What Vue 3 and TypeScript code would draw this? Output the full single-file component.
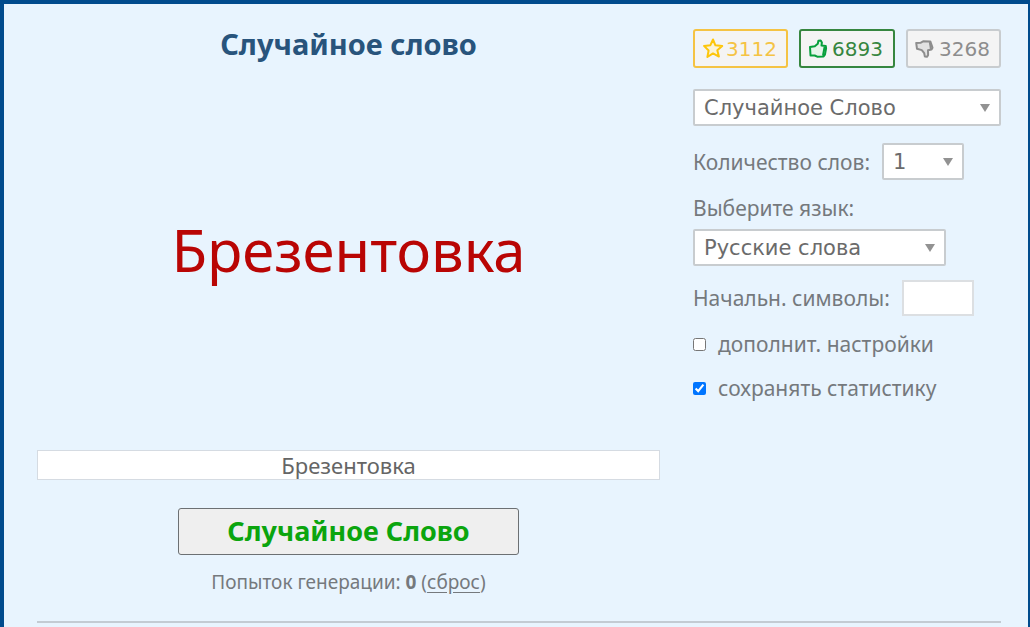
<script setup lang="ts">
import { ref } from 'vue'

const word = ref('Брезентовка')
const attempts = ref(0)
const generator = ref('Случайное Слово')
const count = ref('1')
const language = ref('Русские слова')
const prefix = ref('')
const extra = ref(false)
const keepStats = ref(true)

const generators: string[] = ['Случайное Слово']
const counts: string[] = ['1', '2', '3', '4', '5']
const languages: string[] = ['Русские слова']

function generate(): void {
  attempts.value += 1
}
</script>

<template>
  <div class="page">
    <div class="columns">
      <main class="stage">
        <h1 class="title">Случайное слово</h1>
        <div class="word">{{ word }}</div>
        <input v-model="word" class="result" type="text" aria-label="Результат" readonly />
        <button class="generate" type="button" @click="generate">Случайное Слово</button>
        <p class="attempts">
          Попыток генерации: <b>{{ attempts }}</b> (<a href="#" @click.prevent="attempts = 0">сброс</a>)
        </p>
      </main>

      <aside class="options">
        <div class="votes">
          <button class="vote star" type="button" aria-label="Избранное">
            <svg width="22" height="22" viewBox="0 0 22 22" aria-hidden="true">
              <path d="M11 1.5l2.4 5.8 6.8.8-4.9 4.2 1.6 6.3-5.9-3.2-5.6 3.6 1.2-6.5-4.6-4.6 6.4-.7z" />
            </svg>
            <span>3112</span>
          </button>
          <button class="vote up" type="button" aria-label="Нравится">
            <svg width="20" height="20" viewBox="0 0 20 20" aria-hidden="true">
              <path d="M2 8l4.8-.8 3-2.5.6-3 2.3-.3 1.2 2-.4 3.2 4.3.5.3 2.2-1.2 6.4-1.3 1.7-6.4.3-2.5-1.2-4.2-.1z" />
              <path d="M16.6 8l-1.6 8.8" />
            </svg>
            <span>6893</span>
          </button>
          <button class="vote down" type="button" aria-label="Не нравится">
            <svg width="20" height="20" viewBox="0 0 20 20" aria-hidden="true">
              <path d="M1.2 3.9l4.3-.1 3-1.6 6.8.2 2.2 6.3-1 1.8-3.5.7.1 4.9-1.2 1.7-2.1-.4-.6-3.3-2.4-3-4.8-1.3z" />
              <path d="M14.8 3l1.1 6.9" />
            </svg>
            <span>3268</span>
          </button>
        </div>

        <div class="select wide">
          <select v-model="generator" aria-label="Генератор">
            <option v-for="item in generators" :key="item">{{ item }}</option>
          </select>
        </div>

        <div class="row">
          <label for="count">Количество слов:</label>
          <div class="select count">
            <select id="count" v-model="count">
              <option v-for="item in counts" :key="item">{{ item }}</option>
            </select>
          </div>
        </div>

        <div class="field">
          <label for="language">Выберите язык:</label>
          <div class="select language">
            <select id="language" v-model="language">
              <option v-for="item in languages" :key="item">{{ item }}</option>
            </select>
          </div>
        </div>

        <div class="row prefix-row">
          <label for="prefix">Начальн. символы:</label>
          <input id="prefix" v-model="prefix" class="prefix" type="text" />
        </div>

        <label class="check"><input v-model="extra" type="checkbox" />дополнит. настройки</label>
        <label class="check"><input v-model="keepStats" type="checkbox" />сохранять статистику</label>
      </aside>
    </div>
    <hr class="divider" />
  </div>
</template>

<style>
body {
  margin: 0;
}
</style>

<style scoped>
.page,
.page * {
  box-sizing: border-box;
}

.page {
  min-height: 100vh;
  padding: 0 27px 0 33px;
  border: solid #004b8d;
  border-width: 4px 2px 0 4px;
  background: #e8f4fe;
  color: #75797d;
  font-family: "Noto Sans", "Open Sans", sans-serif;
  font-size: 21px;
}

.columns {
  display: grid;
  grid-template-columns: minmax(0, 1fr) 308px;
  gap: 33px;
}

.stage {
  display: flex;
  flex-direction: column;
  align-items: center;
}

.title {
  margin: 20px 0 0;
  color: #28547c;
  font-size: 29px;
  font-weight: 700;
  line-height: 40px;
}

.word {
  display: flex;
  align-items: center;
  height: 386px;
  padding-bottom: 14px;
  color: #b90504;
  font-size: 58px;
  line-height: 80px;
}

.result {
  width: 100%;
  height: 30px;
  padding: 0;
  border: 1px solid #d5dbe2;
  background: #fff;
  color: #656565;
  font-family: inherit;
  font-size: 22px;
  line-height: 28px;
  text-align: center;
}

.generate {
  width: 341px;
  max-width: 100%;
  height: 47px;
  margin-top: 28px;
  padding: 0 0 2px;
  border: 1px solid #6c7073;
  border-radius: 3px;
  background: #efefef;
  color: #0ba50e;
  font-family: inherit;
  font-size: 27px;
  font-weight: 700;
  line-height: 40px;
}

.attempts {
  margin: 12px 0 0;
  font-size: 19px;
  line-height: 30px;
}

.attempts a {
  color: inherit;
  text-underline-offset: 3px;
}

.options {
  padding-top: 25px;
}

.votes {
  display: grid;
  grid-template-columns: 95px 96px 95px;
  justify-content: space-between;
}

.vote {
  display: flex;
  align-items: center;
  gap: 4px;
  height: 39px;
  padding: 0 0 0 7px;
  border: 2px solid currentColor;
  border-radius: 3px;
  background: #f4f4f4;
  font-family: "DejaVu Sans", sans-serif;
  font-size: 20px;
}

.vote svg {
  flex: none;
  fill: none;
  stroke: currentColor;
  stroke-width: 2;
  stroke-linejoin: round;
}

.star {
  gap: 2px;
  border-color: #f5c343;
  color: #f5c343;
}

.star svg {
  fill: #fbf4d8;
  stroke: #fdc60b;
}

.up {
  border-color: #36863f;
  color: #36863f;
}

.up svg {
  fill: #e6f5ea;
  stroke: #07a03c;
}

.down {
  border-color: #c8cccf;
  color: #8d8d8d;
}

.down svg {
  fill: #e2e2e2;
}

.select {
  position: relative;
}

.select::after {
  position: absolute;
  top: 15px;
  right: 11px;
  border: solid transparent;
  border-width: 8px 5px 0;
  border-top-color: #929292;
  content: "";
  pointer-events: none;
}

.select select {
  display: block;
  width: 100%;
  height: 37px;
  padding: 0 24px 0 9px;
  border: 2px solid #c8cccf;
  border-radius: 2px;
  appearance: none;
  background: #fff;
  color: #6b6b6b;
  font-family: "DejaVu Sans", sans-serif;
  font-size: 21px;
}

.wide {
  margin-top: 21px;
}

.row {
  display: flex;
  align-items: center;
  gap: 12px;
  margin-top: 17px;
}

.count {
  width: 82px;
}

.field {
  margin-top: 12px;
}

.field label {
  display: block;
  line-height: 32px;
}

.language {
  width: 253px;
  margin-top: 5px;
}

.prefix-row {
  margin-top: 14px;
}

.prefix {
  width: 72px;
  height: 36px;
  padding: 0 8px;
  border: 2px solid #dcdfe2;
  background: #fff;
  color: #6b6b6b;
  font: inherit;
}

.check {
  display: flex;
  align-items: center;
  gap: 12px;
  height: 32px;
  margin-top: 12px;
  line-height: 32px;
}

.check input {
  width: 13px;
  height: 13px;
  margin: 0;
}

.divider {
  height: 2px;
  margin: 24px 0 0;
  border: 0;
  background: #c3cbd3;
}
</style>
